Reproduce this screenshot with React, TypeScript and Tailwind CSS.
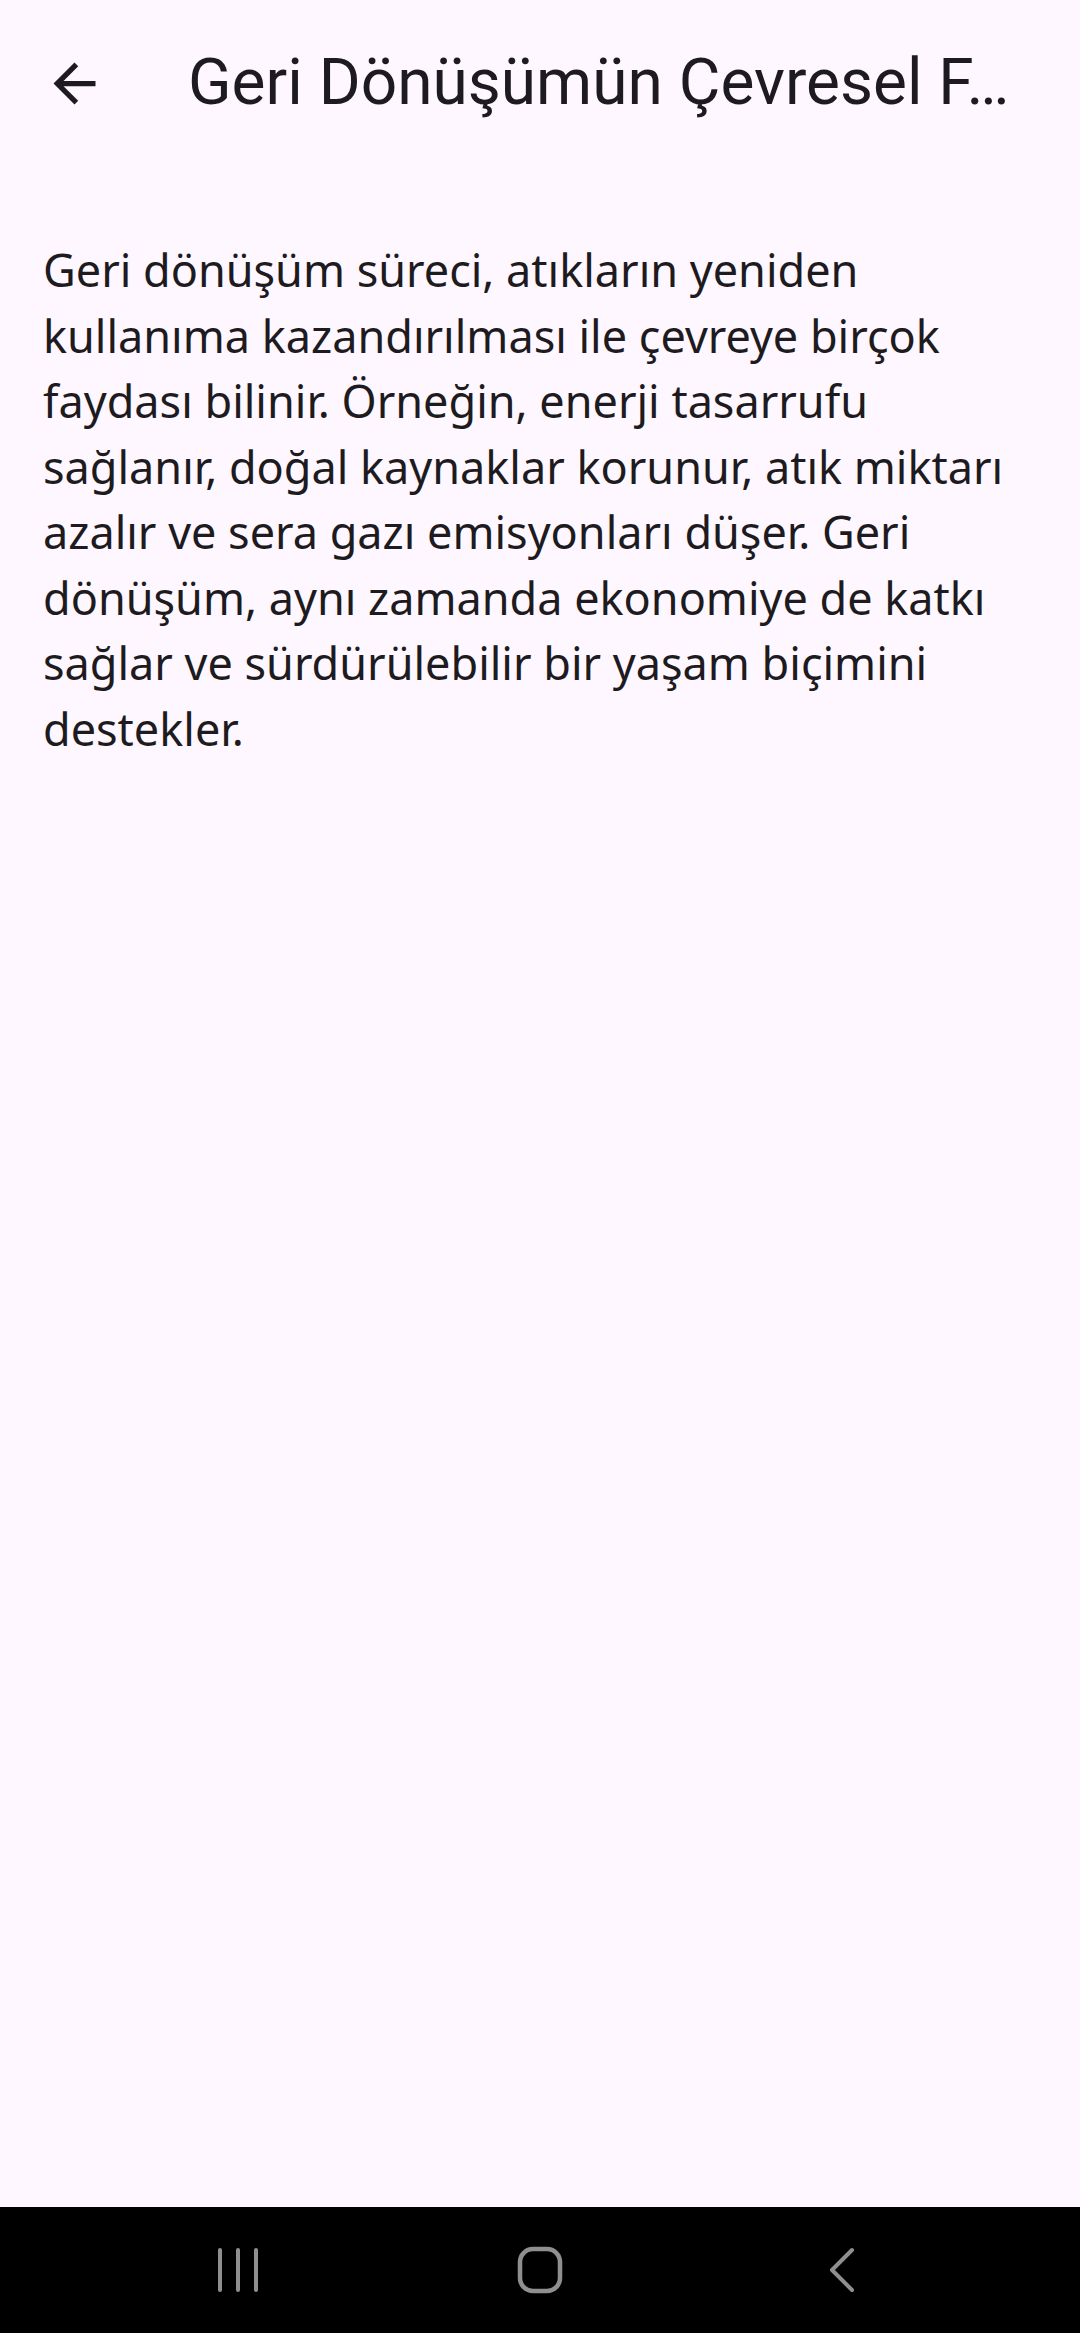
const ArrowBack = () => (
  <svg viewBox="0 0 24 24" className="w-[63px] h-[63px] fill-[#1d1b20]">
    <path d="M20 11H7.83l5.59-5.59L12 4l-8 8 8 8 1.41-1.41L7.83 13H20v-2z" />
  </svg>
);

const RecentsIcon = () => (
  <svg viewBox="0 0 44 46" className="w-[44px] h-[46px]" fill="none" stroke="#8f8f8f" strokeWidth="4" strokeLinecap="round">
    <path d="M4 3v40M22 3v40M40 3v40" />
  </svg>
);

const HomeIcon = () => (
  <svg viewBox="0 0 46 48" className="w-[46px] h-[48px]" fill="none" stroke="#8f8f8f" strokeWidth="4.5">
    <rect x="3" y="3" width="40" height="42" rx="13" />
  </svg>
);

const BackIcon = () => (
  <svg viewBox="0 0 28 46" className="w-[28px] h-[46px]" fill="none" stroke="#8f8f8f" strokeWidth="4" strokeLinecap="round" strokeLinejoin="round">
    <path d="M24 3 4 23l20 20" />
  </svg>
);

const body =
  "Geri dönüşüm süreci, atıkların yeniden kullanıma kazandırılması ile çevreye birçok faydası bilinir. Örneğin, enerji tasarrufu sağlanır, doğal kaynaklar korunur, atık miktarı azalır ve sera gazı emisyonları düşer. Geri dönüşüm, aynı zamanda ekonomiye de katkı sağlar ve sürdürülebilir bir yaşam biçimini destekler.";

export default function App() {
  return (
    <div className="min-h-[2333px] flex flex-col bg-[#fef7ff]">
      <header className="h-[166px] flex items-center pl-[43px] pr-[40px]">
        <button className="shrink-0">
          <ArrowBack />
        </button>
        <h1 className="ml-[82px] whitespace-nowrap text-[64px] leading-none text-[#1d1b20] font-['Roboto',sans-serif]">
          Geri Dönüşümün Çevresel F…
        </h1>
      </header>

      <main className="flex-1 px-[43px] pt-[71px]">
        <p className="text-[45px] leading-[65.5px] text-[#1d1b20] font-['Noto_Sans',sans-serif]">
          {body}
        </p>
      </main>

      <nav className="h-[126px] bg-black flex items-center justify-center">
        <div className="w-[302px] flex justify-center">
          <RecentsIcon />
        </div>
        <div className="w-[302px] flex justify-center">
          <HomeIcon />
        </div>
        <div className="w-[302px] flex justify-center">
          <BackIcon />
        </div>
      </nav>
    </div>
  );
}
